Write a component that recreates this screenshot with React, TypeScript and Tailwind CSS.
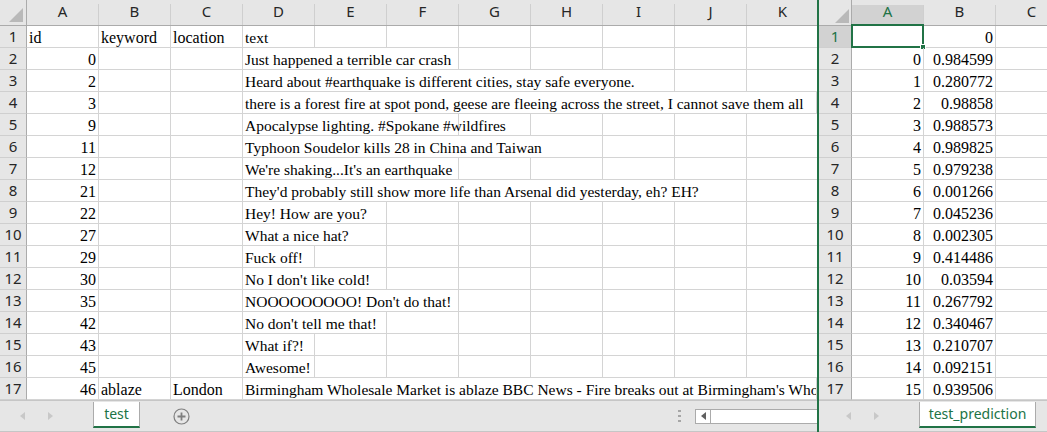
import type { ReactNode } from "react";

const LEFT_COLS = ["A", "B", "C", "D", "E", "F", "G", "H", "I", "J", "K"];
const RIGHT_COLS = ["A", "B", "C"];

const SPAN_W: Record<number, string> = {
  1: "w-[72px]",
  2: "w-[144px]",
  3: "w-[216px]",
  4: "w-[288px]",
  5: "w-[360px]",
  6: "w-[432px]",
  7: "w-[504px]",
  8: "w-[576px]",
};

// span = how many columns (D..K) the text runs over
const tweets = [
  { id: "id", kw: "keyword", loc: "location", text: "text", span: 1 },
  { id: "0", text: "Just happened a terrible car crash", span: 3 },
  { id: "2", text: "Heard about #earthquake is different cities, stay safe everyone.", span: 6 },
  {
    id: "3",
    text: "there is a forest fire at spot pond, geese are fleeing across the street, I cannot save them all",
    span: 8,
  },
  { id: "9", text: "Apocalypse lighting. #Spokane #wildfires", span: 3 },
  { id: "11", text: "Typhoon Soudelor kills 28 in China and Taiwan", span: 5 },
  { id: "12", text: "We're shaking...It's an earthquake", span: 3 },
  {
    id: "21",
    text: "They'd probably still show more life than Arsenal did yesterday, eh? EH?",
    span: 7,
  },
  { id: "22", text: "Hey! How are you?", span: 2 },
  { id: "27", text: "What a nice hat?", span: 2 },
  { id: "29", text: "Fuck off!", span: 1 },
  { id: "30", text: "No I don't like cold!", span: 2 },
  { id: "35", text: "NOOOOOOOOO! Don't do that!", span: 3 },
  { id: "42", text: "No don't tell me that!", span: 2 },
  { id: "43", text: "What if?!", span: 1 },
  { id: "45", text: "Awesome!", span: 1 },
  {
    id: "46",
    kw: "ablaze",
    loc: "London",
    text: "Birmingham Wholesale Market is ablaze BBC News - Fire breaks out at Birmingham's Wholesale Market",
    span: 8,
  },
];

const preds: [string, string][] = [
  ["", "0"],
  ["0", "0.984599"],
  ["1", "0.280772"],
  ["2", "0.98858"],
  ["3", "0.988573"],
  ["4", "0.989825"],
  ["5", "0.979238"],
  ["6", "0.001266"],
  ["7", "0.045236"],
  ["8", "0.002305"],
  ["9", "0.414486"],
  ["10", "0.03594"],
  ["11", "0.267792"],
  ["12", "0.340467"],
  ["13", "0.210707"],
  ["14", "0.092151"],
  ["15", "0.939506"],
];

function CornerTriangle() {
  return (
    <svg width="14" height="14" viewBox="0 0 14 14">
      <polygon points="14,0 14,14 0,14" fill="#b9b9b9" />
    </svg>
  );
}

function Cell({
  className = "",
  children,
}: {
  className?: string;
  children?: ReactNode;
}) {
  return (
    <div
      className={`h-full shrink-0 whitespace-nowrap border-r border-b border-[#d4d4d4] px-[2px] pt-[3px] leading-[18px] text-black ${className}`}
    >
      {children}
    </div>
  );
}

function RowHead({
  n,
  width,
  active = false,
}: {
  n: number;
  width: string;
  active?: boolean;
}) {
  return (
    <div
      className={`flex h-full shrink-0 items-center justify-center border-r border-b border-r-[#ababab] border-b-[#cfcfcf] font-['Noto_Sans',sans-serif] text-[15px] leading-[21px] ${width} ${
        active ? "bg-[#d2d2d2] text-[#217346]" : "bg-[#e6e6e6] text-[#262626]"
      }`}
    >
      {n}
    </div>
  );
}

function Arrow({ dir, color }: { dir: "left" | "right"; color: string }) {
  return (
    <svg width="5" height="8" viewBox="0 0 5 8">
      {dir === "left" ? (
        <polygon points="5,0 5,8 0,4" fill={color} />
      ) : (
        <polygon points="0,0 0,8 5,4" fill={color} />
      )}
    </svg>
  );
}

function SheetTab({ label, width }: { label: string; width: string }) {
  return (
    <div
      className={`mt-[1px] flex h-[26px] shrink-0 items-center justify-center border-x border-[#ababab] border-b-2 border-b-[#217346] bg-white pb-[2px] font-['Noto_Sans',sans-serif] text-[14px] text-[#217346] ${width}`}
    >
      {label}
    </div>
  );
}

function LeftPane() {
  return (
    <div className="flex h-full w-[817px] shrink-0 flex-col overflow-hidden">
      <div className="flex-1 overflow-hidden bg-white font-['Liberation_Serif',serif] text-[16px]">
        <div className="flex h-[26px] border-b border-[#ababab] bg-[#e6e6e6]">
          <div className="flex h-full w-[27px] shrink-0 items-end justify-end border-r border-[#ababab] pr-[3px] pb-[3px]">
            <CornerTriangle />
          </div>
          <div className="flex pt-[4px]">
            {LEFT_COLS.map((c) => (
              <div
                key={c}
                className="flex h-[21px] w-[72px] shrink-0 items-start justify-center border-r border-[#cfcfcf] font-['Noto_Sans',sans-serif] text-[15px] text-[#262626]"
              >
                <span className="-mt-[3px] leading-[21px]">{c}</span>
              </div>
            ))}
          </div>
        </div>
        {tweets.map((t, i) => (
          <div key={i} className="flex h-[22px]">
            <RowHead n={i + 1} width="w-[27px]" />
            <Cell className={`w-[72px] ${i === 0 ? "text-left" : "text-right"}`}>{t.id}</Cell>
            <Cell className="w-[72px]">{t.kw}</Cell>
            <Cell className="w-[72px]">{t.loc}</Cell>
            <Cell
              className={`text-[15.5px] ${t.span === 8 ? "w-[574px] overflow-hidden" : SPAN_W[t.span]}`}
            >
              {t.text}
            </Cell>
            {Array.from({ length: 8 - t.span }).map((_, k) => (
              <Cell key={k} className="w-[72px]" />
            ))}
          </div>
        ))}
      </div>
      <div className="flex h-[32px] shrink-0 items-start border-t border-b border-[#c6c6c6] bg-[#e6e6e6]">
        <div className="flex h-[30px] w-[93px] shrink-0 items-center gap-[23px] pl-[20px]">
          <Arrow dir="left" color="#c8c8c8" />
          <Arrow dir="right" color="#c8c8c8" />
        </div>
        <SheetTab label="test" width="w-[47px]" />
        <div className="ml-[33px] flex h-[30px] items-center">
          <svg width="17" height="17" viewBox="0 0 17 17">
            <circle cx="8.5" cy="8.5" r="7.5" fill="none" stroke="#7f7f7f" strokeWidth="1.2" />
            <path d="M8.5 4.5v8M4.5 8.5h8" stroke="#7f7f7f" strokeWidth="1.8" />
          </svg>
        </div>
        <div className="ml-auto flex h-[30px] items-center">
          <div className="flex h-[12px] w-[3px] flex-col justify-between">
            <span className="block h-[2px] w-[3px] bg-[#a6a6a6]" />
            <span className="block h-[2px] w-[3px] bg-[#a6a6a6]" />
            <span className="block h-[2px] w-[3px] bg-[#a6a6a6]" />
          </div>
          <div className="ml-[14px] flex h-[15px] w-[122px] border-y border-l border-[#ababab] bg-white">
            <div className="flex w-[15px] items-center justify-center border-r border-[#ababab]">
              <Arrow dir="left" color="#606060" />
            </div>
          </div>
        </div>
      </div>
    </div>
  );
}

function RightPane() {
  return (
    <div className="flex h-full flex-1 flex-col overflow-hidden">
      <div className="flex-1 overflow-hidden bg-white font-['Liberation_Serif',serif] text-[16px]">
        <div className="flex h-[26px] border-b border-[#ababab] bg-[#e6e6e6]">
          <div className="flex h-full w-[33px] shrink-0 items-end justify-end border-r border-[#ababab] pr-[2px] pb-[2px]">
            <CornerTriangle />
          </div>
          <div className="flex pt-[5px]">
            {RIGHT_COLS.map((c, i) => (
              <div
                key={c}
                className={`flex h-[20px] w-[72px] shrink-0 items-start justify-center border-r border-[#cfcfcf] font-['Noto_Sans',sans-serif] text-[15px] ${
                  i === 0 ? "bg-[#d2d2d2] text-[#217346]" : "text-[#262626]"
                }`}
              >
                <span className="-mt-[4px] leading-[21px]">{c}</span>
              </div>
            ))}
          </div>
        </div>
        {preds.map(([a, b], i) => (
          <div key={i} className="flex h-[22px]">
            <RowHead n={i + 1} width="w-[33px]" active={i === 0} />
            <Cell className="relative w-[72px] text-right">
              {a}
              {i === 0 && (
                <div className="absolute -inset-[1px] -top-[2px] border-2 border-[#217346]">
                  <div className="absolute -right-[4px] -bottom-[4px] h-[6px] w-[6px] border border-white bg-[#217346]" />
                </div>
              )}
            </Cell>
            <Cell className="w-[72px] text-right">{b}</Cell>
            <Cell className="w-[72px]" />
          </div>
        ))}
      </div>
      <div className="flex h-[32px] shrink-0 items-start border-t border-b border-[#c6c6c6] bg-[#e6e6e6]">
        <div className="flex h-[30px] w-[100px] shrink-0 items-center gap-[23px] pl-[27px]">
          <Arrow dir="left" color="#c8c8c8" />
          <Arrow dir="right" color="#c8c8c8" />
        </div>
        <SheetTab label="test_prediction" width="w-[117px]" />
      </div>
    </div>
  );
}

export default function App() {
  return (
    <div className="flex h-[432px] w-[1047px] overflow-hidden bg-[#e6e6e6]">
      <LeftPane />
      <div className="h-full w-[2px] shrink-0 bg-[#217346]" />
      <RightPane />
    </div>
  );
}
